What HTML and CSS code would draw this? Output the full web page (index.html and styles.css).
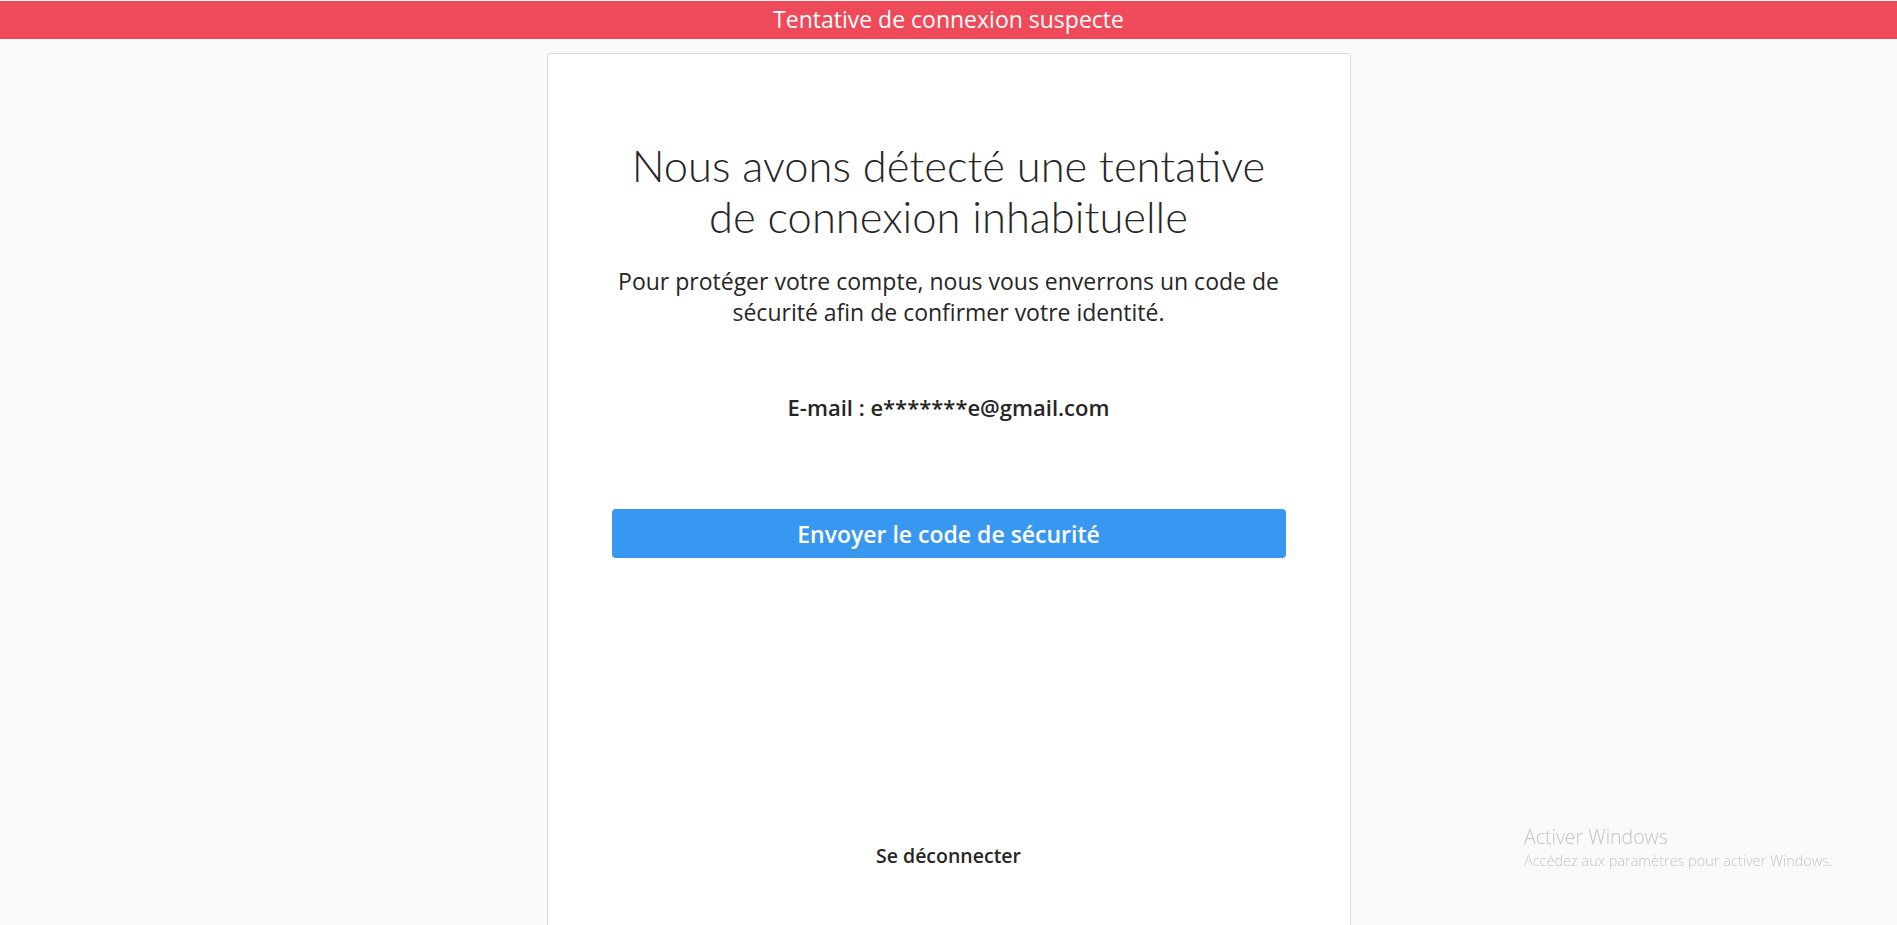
FILE: index.html
```html
<!DOCTYPE html>
<html lang="fr">
<head>
<meta charset="utf-8">
<title>Tentative de connexion suspecte</title>
<link rel="stylesheet" href="styles.css">
</head>
<body>
<header class="alert-bar">Tentative de connexion suspecte</header>
<main class="card">
  <h1 class="title">Nous avons détecté une tentative de connexion inhabituelle</h1>
  <p class="lead">Pour protéger votre compte, nous vous enverrons un code de sécurité afin de confirmer votre identité.</p>
  <p class="email">E-mail : e*******e@gmail.com</p>
  <button class="send-btn" type="button">Envoyer le code de sécurité</button>
  <p class="logout">Se déconnecter</p>
</main>
<div class="watermark">
  <div class="wm-title">Activer Windows</div>
  <div class="wm-sub">Accédez aux paramètres pour activer Windows.</div>
</div>
</body>
</html>
```
FILE: styles.css
```css
html, body {
  margin: 0;
  padding: 0;
  height: 100%;
  overflow: hidden;
}
body {
  background: #fafafa;
  font-family: "Open Sans", "Noto Sans", sans-serif;
  color: #262626;
}
.alert-bar {
  margin-top: 1px;
  height: 38px;
  line-height: 37px;
  background: #ef4a5a;
  color: #fff;
  text-align: center;
  font-size: 23px;
  font-weight: 400;
}
.card {
  box-sizing: border-box;
  width: 804px;
  min-height: 1000px;
  margin: 14px auto 0;
  background: #fff;
  border: 1px solid #dbdbdb;
  border-radius: 3px;
  padding: 86px 64px 0;
  display: flex;
  flex-direction: column;
  align-items: stretch;
  text-align: center;
}
.title {
  margin: 0 auto;
  max-width: 660px;
  font-family: Lato, "Open Sans", sans-serif;
  font-size: 43.5px;
  line-height: 51px;
  font-weight: 300;
  color: #262626;
}
.lead {
  margin: 24px auto 0;
  max-width: 674px;
  font-size: 23px;
  line-height: 31px;
  color: #262626;
}
.email {
  margin: 67px 0 0;
  font-size: 22px;
  line-height: 24px;
  font-weight: 600;
}
.send-btn {
  margin-top: 90px;
  height: 49px;
  border: 0;
  border-radius: 4px;
  background: #3897f0;
  color: #fff;
  font-family: inherit;
  font-size: 23px;
  font-weight: 600;
  cursor: pointer;
}
.logout {
  margin: 288px 0 0;
  font-size: 19.5px;
  line-height: 20px;
  font-weight: 600;
}
.watermark {
  position: fixed;
  left: 1524px;
  top: 825px;
  color: #c4c4c4;
}
.wm-title {
  font-size: 19.5px;
  line-height: 24px;
  font-weight: 300;
}
.wm-sub {
  font-size: 14.5px;
  line-height: 24px;
  font-weight: 300;
}
```
